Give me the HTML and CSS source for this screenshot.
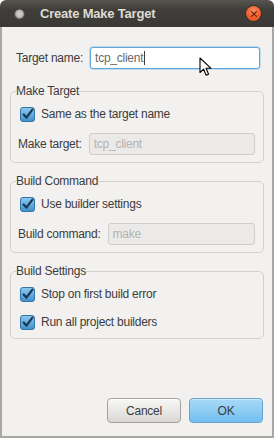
FILE: index.html
```html
<!DOCTYPE html>
<html lang="en">

<head>
  <meta charset="UTF-8">
  <meta name="viewport" content="width=device-width, initial-scale=1.0">
  <title>Create Make Target</title>
  <link rel="stylesheet" href="styles.css">
</head>

<body>
  <div class="window">
    <div class="titlebar">
      <span class="menu-dot"></span>
      <span class="title">Create Make Target</span>
      <span class="close">
        <svg width="14" height="14" viewBox="0 0 14 14">
          <path d="M4.6 4.6 L9.4 9.4 M9.4 4.6 L4.6 9.4" stroke="#6a220c" stroke-width="1.3" stroke-linecap="round" />
        </svg>
      </span>
    </div>

    <div class="content">
      <div class="row name-row">
        <span class="label">Target name:</span>
        <div class="entry focused">tcp_client<span class="caret"></span></div>
      </div>

      <fieldset class="frame">
        <legend>Make Target</legend>
        <div class="check-row"><span class="check"></span>Same as the target name</div>
        <div class="row">
          <span class="label">Make target:</span>
          <div class="entry disabled">tcp_client</div>
        </div>
      </fieldset>

      <fieldset class="frame">
        <legend>Build Command</legend>
        <div class="check-row"><span class="check"></span>Use builder settings</div>
        <div class="row">
          <span class="label">Build command:</span>
          <div class="entry disabled">make</div>
        </div>
      </fieldset>

      <fieldset class="frame">
        <legend>Build Settings</legend>
        <div class="check-row"><span class="check"></span>Stop on first build error</div>
        <div class="check-row"><span class="check"></span>Run all project builders</div>
      </fieldset>

      <div class="buttons">
        <button class="btn">Cancel</button>
        <button class="btn ok">OK</button>
      </div>
    </div>

    <!-- mouse pointer over the entry -->
    <svg class="pointer" width="14" height="20" viewBox="0 0 14 20">
      <path d="M1 1 L1 15.5 L4.6 12.2 L7.2 18.2 L9.6 17.2 L7 11.3 L12 11.3 Z" fill="#fff" stroke="#000" stroke-width="1.1" stroke-linejoin="round" />
    </svg>
  </div>

  <script>
    document.querySelectorAll(".check").forEach(box => {
      box.innerHTML =
        '<svg width="15" height="15" viewBox="0 0 15 15">' +
        '<defs><linearGradient id="cb" x1="0" y1="0" x2="0" y2="1">' +
        '<stop offset="0" stop-color="#8ccbf0"/><stop offset="1" stop-color="#3f8fca"/></linearGradient></defs>' +
        '<rect x="0.5" y="0.5" width="14" height="14" rx="2.5" fill="url(#cb)" stroke="#3275a8"/>' +
        '<path d="M3.6 7.6 L6.4 10.6 L12.4 2.6" fill="none" stroke="#1c3550" stroke-width="2.2" stroke-linecap="round" stroke-linejoin="round"/>' +
        '</svg>';
    });
  </script>
</body>

</html>
```

FILE: styles.css
```css
* {
  margin: 0;
  padding: 0;
  box-sizing: border-box;
}

body {
  font-family: 'Liberation Sans', Arial, sans-serif;
  font-size: 12px;
  letter-spacing: -0.25px;
  color: #3c3c3c;
  background: #ffffff;
}

.window {
  position: relative;
  width: 274px;
  height: 438px;
  display: flex;
  flex-direction: column;
}

.titlebar {
  height: 27px;
  flex: none;
  display: flex;
  align-items: center;
  padding-left: 14px;
  padding-right: 13px;
  border-radius: 6px 6px 0 0;
  background: linear-gradient(#57554f, #3f3e3a 35%, #3a3935);
}

.menu-dot {
  width: 11px;
  height: 11px;
  border-radius: 50%;
  background: radial-gradient(circle at 50% 45%, #d4d3cf 0, #b9b8b4 45%, #55544f 60%, #2e2d2a 100%);
  margin-top: 1px;
}

.title {
  margin-left: 15px;
  color: #dfdbd2;
  font-weight: bold;
  font-size: 13px;
  letter-spacing: -0.2px;
  flex: 1;
}

.close {
  width: 15px;
  height: 15px;
  border-radius: 50%;
  background: radial-gradient(circle at 50% 35%, #fd9166 0, #f2622e 50%, #d84a1d 100%);
  box-shadow: 0 0 0 1px #33322e;
  display: flex;
  align-items: center;
  justify-content: center;
}

.content {
  flex: 1;
  display: flex;
  flex-direction: column;
  background: #f2f1f0;
  border: 2px solid #a9a8a4;
  border-top: none;
  padding: 0 8px 0 8px;
}

.row {
  display: flex;
  align-items: center;
  height: 22px;
}

.name-row {
  margin-top: 20px;
  padding-left: 6px;
}

.label {
  margin-right: 7px;
  white-space: nowrap;
}

.entry {
  flex: 1;
  height: 22px;
  line-height: 20px;
  padding-left: 4px;
  border-radius: 3px;
  border: 1px solid #cfcecb;
  white-space: nowrap;
}

.entry.focused {
  background: #ffffff;
  color: #6a6a6a;
  border-color: #5fa6dc;
  box-shadow: 0 0 0 1px rgba(110, 175, 225, 0.35);
  margin-right: 4px;
}

.caret {
  display: inline-block;
  width: 1px;
  height: 14px;
  background: #3c3c3c;
  vertical-align: -3px;
  margin-left: 1px;
}

.entry.disabled {
  background: #ebeae8;
  color: #b4b3b0;
}

.frame {
  border: 1px solid #d2d0cc;
  border-radius: 5px;
  padding: 0 8px 7px 6px;
  margin-top: 10px;
}

.frame:first-of-type {
  margin-top: 14px;
}

.frame legend {
  line-height: 16px;
  padding: 0;
  margin-left: -1px;
}

.frame .row .label {
  margin-left: 1px;
}

.check-row {
  display: flex;
  align-items: center;
  height: 18px;
  margin: 6px 0 10px 3px;
}

.check-row + .check-row {
  margin-top: 0;
}

.frame .check-row:last-child {
  margin-bottom: 0;
}

.check {
  width: 15px;
  height: 15px;
  margin-right: 6px;
  display: flex;
}

.buttons {
  margin-top: auto;
  margin-bottom: 13px;
  display: flex;
  justify-content: flex-end;
  gap: 8px;
  padding-right: 1px;
}

.btn {
  width: 74px;
  height: 25px;
  font-family: inherit;
  font-size: 12px;
  letter-spacing: inherit;
  color: #3c3c3c;
  border-radius: 4px;
  border: 1px solid #a3a29f;
  background: linear-gradient(#f7f7f6, #d9d8d6);
  box-shadow: inset 0 1px 0 #ffffff;
}

.btn.ok {
  border-color: #6aa3cd;
  background: linear-gradient(#a9d9f7, #71bff0);
  box-shadow: inset 0 1px 0 #c8e8fb;
}

.pointer {
  position: absolute;
  left: 199px;
  top: 57px;
}
```
